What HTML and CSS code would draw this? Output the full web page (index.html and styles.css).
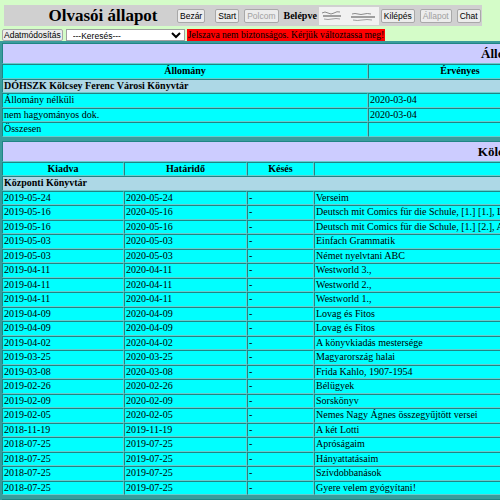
FILE: index.html
```html
<!DOCTYPE html>
<html lang="hu">

<head>
    <meta charset="UTF-8">
    <meta name="viewport" content="width=device-width, initial-scale=1.0">
    <title>Olvasói állapot</title>
    <link rel="stylesheet" href="styles.css">
</head>

<body>
    <!-- Fejléc -->
    <div class="topbar">
        <div class="title">Olvasói állapot</div>
        <button class="btn">Bezár</button>
        <button class="btn start">Start</button>
        <button class="btn" disabled>Polcom</button>
        <span class="logged">Belépve</span>
        <span class="user">
            <svg width="60" height="18" viewBox="0 0 60 18">
                <defs>
                    <filter id="blur"><feGaussianBlur stdDeviation="0.7" /></filter>
                </defs>
                <rect width="60" height="18" fill="#f1f1f1" />
                <g filter="url(#blur)" stroke="#8a8a8a" fill="none">
                    <path d="M3 6 q3 -2 6 0 t6 0 t6 -1" stroke-width="1" />
                    <path d="M4 9 h18" stroke-width="1.6" />
                    <path d="M5 12 q4 1 8 0 t8 0" stroke-width="0.8" />
                    <path d="M33 7 q3 -1 6 0 t6 0 t7 0" stroke-width="1" />
                    <path d="M32 10 h24" stroke-width="1.6" />
                    <path d="M34 13 q4 1 9 0 t10 0" stroke-width="0.8" />
                </g>
            </svg>
        </span>
        <button class="btn">Kilépés</button>
        <button class="btn" disabled>Állapot</button>
        <button class="btn">Chat</button>
    </div>

    <div class="toolbar">
        <button class="btn">Adatmódosítás</button>
        <select class="search">
            <option>---Keresés---</option>
        </select>
        <span class="warning">Jelszava nem biztonságos. Kérjük változtassa meg!</span>
    </div>

    <!-- Állomány -->
    <table class="panel">
        <colgroup>
            <col style="width: 366px">
            <col style="width: 184px">
            <col>
        </colgroup>
        <tr>
            <th class="caption" colspan="3">Állományok</th>
        </tr>
        <tr class="head">
            <th>Állomány</th>
            <th>Érvényes</th>
            <th>Megjegyzés</th>
        </tr>
        <tr class="group">
            <td colspan="3">DÓHSZK Kölcsey Ferenc Városi Könyvtár</td>
        </tr>
        <tr>
            <td>Állomány nélküli</td>
            <td>2020-03-04</td>
            <td></td>
        </tr>
        <tr>
            <td>nem hagyományos dok.</td>
            <td>2020-03-04</td>
            <td></td>
        </tr>
        <tr>
            <td>Összesen</td>
            <td></td>
            <td></td>
        </tr>
    </table>

    <!-- Kölcsönzések -->
    <table class="panel">
        <colgroup>
            <col style="width: 122px">
            <col style="width: 123px">
            <col style="width: 67px">
            <col>
        </colgroup>
        <tr>
            <th class="caption" colspan="4">Kölcsönzések</th>
        </tr>
        <tr class="head">
            <th>Kiadva</th>
            <th>Határidő</th>
            <th>Késés</th>
            <th>Dokumentum</th>
        </tr>
        <tr class="group">
            <td colspan="4">Központi Könyvtár</td>
        </tr>
        <tr><td>2019-05-24</td><td>2020-05-24</td><td>-</td><td>Verseim</td></tr>
        <tr><td>2019-05-16</td><td>2020-05-16</td><td>-</td><td>Deutsch mit Comics für die Schule, [1.] [1.], Lehrerheft</td></tr>
        <tr><td>2019-05-16</td><td>2020-05-16</td><td>-</td><td>Deutsch mit Comics für die Schule, [1.] [2.], Arbeitsheft</td></tr>
        <tr><td>2019-05-03</td><td>2020-05-03</td><td>-</td><td>Einfach Grammatik</td></tr>
        <tr><td>2019-05-03</td><td>2020-05-03</td><td>-</td><td>Német nyelvtani ABC</td></tr>
        <tr><td>2019-04-11</td><td>2020-04-11</td><td>-</td><td>Westworld 3.,</td></tr>
        <tr><td>2019-04-11</td><td>2020-04-11</td><td>-</td><td>Westworld 2.,</td></tr>
        <tr><td>2019-04-11</td><td>2020-04-11</td><td>-</td><td>Westworld 1.,</td></tr>
        <tr><td>2019-04-09</td><td>2020-04-09</td><td>-</td><td>Lovag és Fitos</td></tr>
        <tr><td>2019-04-09</td><td>2020-04-09</td><td>-</td><td>Lovag és Fitos</td></tr>
        <tr><td>2019-04-02</td><td>2020-04-02</td><td>-</td><td>A könyvkiadás mestersége</td></tr>
        <tr><td>2019-03-25</td><td>2020-03-25</td><td>-</td><td>Magyarország halai</td></tr>
        <tr><td>2019-03-08</td><td>2020-03-08</td><td>-</td><td>Frida Kahlo, 1907-1954</td></tr>
        <tr><td>2019-02-26</td><td>2020-02-26</td><td>-</td><td>Bélügyek</td></tr>
        <tr><td>2019-02-09</td><td>2020-02-09</td><td>-</td><td>Sorskönyv</td></tr>
        <tr><td>2019-02-05</td><td>2020-02-05</td><td>-</td><td>Nemes Nagy Ágnes összegyűjtött versei</td></tr>
        <tr><td>2018-11-19</td><td>2019-11-19</td><td>-</td><td>A két Lotti</td></tr>
        <tr><td>2018-07-25</td><td>2019-07-25</td><td>-</td><td>Apróságaim</td></tr>
        <tr><td>2018-07-25</td><td>2019-07-25</td><td>-</td><td>Hányattatásaim</td></tr>
        <tr><td>2018-07-25</td><td>2019-07-25</td><td>-</td><td>Szívdobbanások</td></tr>
        <tr><td>2018-07-25</td><td>2019-07-25</td><td>-</td><td>Gyere velem gyógyítani!</td></tr>
    </table>

    <!-- Előjegyzések -->
    <table class="panel">
        <tr>
            <th class="caption">Előjegyzések</th>
        </tr>
    </table>
</body>

</html>
```

FILE: styles.css
```css
html,
body {
    overflow: hidden;
}

body {
    margin: 0;
    background-color: #d4fcc8;
    font-family: "Liberation Serif", serif;
    font-size: 10px;
    color: black;
}

/* fejléc */
.topbar {
    display: flex;
    align-items: center;
    gap: 5px;
    width: 478px;
    height: 21px;
    margin: 5px 0 0 4px;
    background-color: #d0d0d0;
}

.topbar > * {
    flex-shrink: 0;
}

.title {
    width: 138px;
    padding-left: 30px;
    margin-right: 0;
    text-align: center;
    font-size: 17px;
    font-weight: bold;
}

.btn {
    font-family: "Liberation Sans", sans-serif;
    font-size: 8.5px;
    height: 14px;
    padding: 0 2px;
    line-height: 12px;
    background-color: #ececec;
    border: 1px solid #a8a8a8;
    border-radius: 2px;
    color: black;
}

.btn:disabled {
    color: #a0a0a0;
}

.start {
    margin-left: 5px;
}

.logged {
    font-weight: bold;
    font-size: 10px;
}

.user {
    display: flex;
    margin: 0 -3px;
}

.toolbar {
    display: flex;
    align-items: center;
    gap: 2px;
    height: 13px;
    margin: 2px 0 0 2px;
}

.toolbar .btn {
    height: 12px;
    line-height: 10px;
    padding: 0 1px;
}

.search {
    width: 119px;
    height: 12px;
    margin-left: 1px;
    padding: 0 2px;
    font-family: "Liberation Sans", sans-serif;
    font-size: 8.5px;
    background-color: white;
    border: 1px solid #a0a0a0;
    border-radius: 0;
}

.warning {
    background-color: #ff0000;
    padding: 0 1px;
    font-size: 9.6px;
    line-height: 12px;
}

/* táblák */
.panel {
    width: 1030px;
    table-layout: fixed;
    border-collapse: separate;
    border-spacing: 0;
    border: 2px solid #3a9c9c;
    background-color: #3a9c9c;
}

.panel td,
.panel th {
    padding: 0 1px;
    height: 12.5px;
    line-height: 12.5px;
    background-color: #00ffff;
    border: 1px solid;
    border-color: #1f8585 #66cccc #66cccc #1f8585;
    text-align: left;
    white-space: nowrap;
    overflow: hidden;
    font-weight: normal;
}

.panel .caption {
    height: 19px;
    line-height: 19px;
    text-align: center;
    font-size: 13px;
    font-weight: bold;
    background-color: #ccccff;
}

.panel .head th {
    text-align: center;
    font-weight: bold;
}

.panel .group td {
    background-color: #add8e6;
    font-weight: bold;
}
```
